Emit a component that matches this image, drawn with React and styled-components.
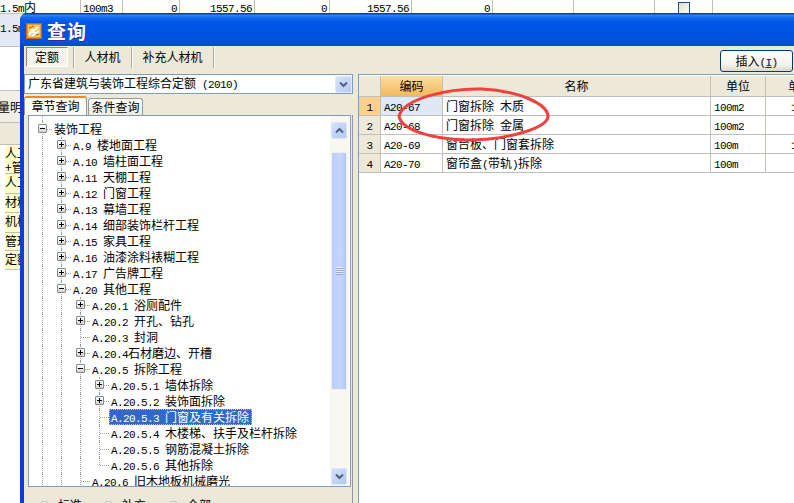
import React from 'react';
import styled, {createGlobalStyle} from 'styled-components';

const cjk = '"Noto Sans CJK SC", "Liberation Sans", sans-serif';
const beige = '#ece9d8';
const gridLine = '#c0bfb8';

const Global = createGlobalStyle`
html, body {
    margin: 0;
    padding: 0;
    background: #fff;
    font-family: ${cjk};
    font-size: 12px;
    color: #000;
}
`;

const Screen = styled.div`
position: relative;
width: 794px;
height: 503px;
overflow: hidden;
background: #fff;
line-height: 16px;
`;

// half-width latin text, same 6px cell as the old bitmap font
const Ascii = styled.span`
font-family: "Liberation Mono", monospace;
font-size: 11px;
letter-spacing: -0.6px;
white-space: pre;
`;

const Mixed = ({children}) => children.split(/([\x20-\x7e]+)/).filter(Boolean).map((part, i) => (
    /^[\x20-\x7e]+$/.test(part) ? <Ascii key={i}>{part}</Ascii> : <span key={i}>{part}</span>
));

/* ---- the sheet behind the dialog ---- */
const SheetRow = styled.div`
display: grid;
grid-template-columns: 81px 42px 57px 75px 75px 82px 81px 81px 81px 58px 82px;
height: 13px;
border-bottom: 1px solid ${gridLine};
`;
const SheetCell = styled.div`
border-right: 1px solid ${gridLine};
padding: 0 ${props => props.$flush ? 0 : 2}px;
text-align: ${props => props.$right ? 'right' : 'left'};
line-height: 14px;
white-space: nowrap;
display: ${props => props.$center ? 'flex' : 'block'};
justify-content: center;
`;
const CheckMark = styled.div`
width: 10px;
height: 11px;
margin-top: 2px;
border: 1px solid #1c5180;
background: linear-gradient(135deg, #dcdcd7, #ffffff);
`;
const SelectedRow = styled.div`
width: 20px;
background: #e2e9f5;
border-bottom: 1px solid ${gridLine};
padding-top: 5px;
box-sizing: border-box;
height: 33px;
white-space: nowrap;
overflow: hidden;
`;
const SheetGap = styled.div`
height: 43px;
`;
const LowerTabs = styled.div`
width: 20px;
background: #f1efe4;
border-top: 1px solid ${gridLine};
border-bottom: 1px solid ${gridLine};
padding-top: 8px;
box-sizing: border-box;
height: 33px;
font-size: 12px;
white-space: nowrap;
overflow: hidden;
text-indent: -2px;
`;
const LowerHead = styled.div`
width: 20px;
height: 21px;
background: ${beige};
border-bottom: 1px solid ${gridLine};
`;
const LowerRow = styled.div`
width: 15px;
height: ${props => props.$h}px;
box-sizing: border-box;
margin-left: 5px;
padding-top: 1px;
background: #ffffc8;
border-bottom: 1px solid ${gridLine};
line-height: 14px;
white-space: nowrap;
overflow: hidden;
`;

/* ---- query dialog ---- */
const Dialog = styled.div`
position: absolute;
left: 20px;
top: 13px;
width: 774px;
height: 490px;
display: flex;
flex-direction: column;
border-radius: 7px 0 0 0;
overflow: hidden;
background: #0a3fd6;
`;
const TitleBar = styled.div`
height: 33px;
flex: none;
display: flex;
align-items: center;
gap: 5px;
padding: 2px 0 0 6px;
box-sizing: border-box;
background: linear-gradient(#0a3ea8 0, #0a3ea8 1px, #2f86f5 2px, #0f66ee 5px, #0055e5 10px, #0153dd 28px, #0a4bc8 33px);
`;
const TitleText = styled.div`
color: #fff;
font-size: 19px;
font-weight: 700;
line-height: 24px;
letter-spacing: 1px;
text-shadow: 1px 1px 0 #3c2a9c;
`;
const Body = styled.div`
flex: 1;
margin-left: 4px;
background: ${beige};
display: flex;
flex-direction: column;
min-height: 0;
`;
const Toolbar = styled.div`
height: 28px;
flex: none;
display: flex;
align-items: flex-start;
padding: 1px 1px 0 2px;
box-sizing: border-box;
`;
const ToolButton = styled.div`
height: 20px;
width: ${props => props.$w}px;
box-sizing: border-box;
text-align: center;
line-height: 20px;
${props => props.$active ? `
    border: 1px solid;
    border-color: #8c8a7e #fff #fff #8c8a7e;
    background: repeating-conic-gradient(#fff 0 25%, ${beige} 0 50%) 0 0 / 2px 2px;
    line-height: 18px;
` : ''}
`;
const ToolSep = styled.div`
width: 1px;
height: 21px;
background: #aca899;
margin-left: ${props => props.$ml || 0}px;
box-shadow: 1px 0 0 #fff;
`;
const InsertButton = styled.div`
margin-left: auto;
margin-top: 3px;
width: 73px;
height: 22px;
box-sizing: border-box;
border: 1px solid #003c74;
border-radius: 3px;
background: linear-gradient(#ffffff, #f3f2ea 70%, #dcd8c6);
text-align: center;
line-height: 20px;
`;
const HotKey = styled.span`
font-family: "Liberation Mono", monospace;
font-size: 11px;
letter-spacing: -0.6px;
color: #0a246a;
text-shadow: 0 0 1px #e8a040;
u { text-decoration: underline; }
`;
const Panes = styled.div`
flex: 1;
display: flex;
min-height: 0;
`;
const LeftPane = styled.div`
width: 329px;
flex: none;
display: flex;
flex-direction: column;
`;
const Combo = styled.div`
height: 20px;
flex: none;
box-sizing: border-box;
border: 1px solid #7f9db9;
background: #fff;
padding-left: 3px;
display: flex;
align-items: center;
justify-content: space-between;
line-height: 18px;
`;
const ComboArrow = styled.div`
width: 17px;
height: 17px;
box-sizing: border-box;
border-radius: 2px;
background: linear-gradient(135deg, #d8e4fb, #b6c9f5);
border: 1px solid #e0e8fb;
display: flex;
align-items: center;
justify-content: center;
`;
const Tabs = styled.div`
height: 19px;
flex: none;
margin-top: 2px;
display: flex;
align-items: flex-end;
`;
const Tab = styled.div`
box-sizing: border-box;
width: ${props => props.$w}px;
height: ${props => props.$active ? 19 : 17}px;
margin-left: ${props => props.$active ? 0 : 1}px;
text-align: center;
line-height: 16px;
border: 1px solid #919b9c;
border-bottom: none;
border-radius: 3px 3px 0 0;
background: ${props => props.$active ? '#fbfaf5' : 'linear-gradient(#fff, #ecebe2)'};
border-top: ${props => props.$active ? '2px solid #e68b2c' : '1px solid #919b9c'};
`;
const TabPane = styled.div`
flex: 1;
min-height: 0;
padding: 0 1px 0 4px;
border-right: 1px solid #919b9c;
overflow: hidden;
`;
const TreeBox = styled.div`
width: 323px;
height: 372px;
box-sizing: border-box;
border: 1px solid #7f9db9;
background: #fff;
display: flex;
overflow: hidden;
`;
const TreeRows = styled.div`
flex: 1;
padding-left: 4px;
overflow: hidden;
white-space: nowrap;
`;
const TreeLead = styled.div`
height: 5px;
display: flex;
`;
const TreeRow = styled.div`
height: 16px;
display: flex;
align-items: center;
`;
const Guide = styled.div`
width: 19px;
height: 100%;
flex: none;
position: relative;
&::before {
    content: '';
    position: absolute;
    left: 9px;
    top: 0;
    height: ${props => props.$half ? '50%' : '100%'};
    border-left: 1px dotted #a3a39c;
}
`;
const Stub = styled.div`
position: absolute;
left: 10px;
top: 8px;
width: 9px;
border-top: 1px dotted #a3a39c;
`;
const Expander = styled.div`
position: absolute;
left: 5px;
top: 3px;
width: 9px;
height: 9px;
box-sizing: border-box;
border: 1px solid #7a8a99;
border-radius: 1px;
background:
    linear-gradient(#000, #000) center / 5px 1px no-repeat,
    ${props => props.$plus ? 'linear-gradient(#000, #000) center / 1px 5px no-repeat,' : ''}
    linear-gradient(#fff, #d8d4c4);
`;
const TreeLabel = styled.div`
height: 16px;
line-height: 15px;
padding: 0 3px 0 2px;
box-sizing: border-box;
${props => props.$selected ? `
    background: #316ac5;
    color: #fff;
    outline: 1px dotted #e8c060;
    outline-offset: -1px;
` : ''}
`;
const ScrollBar = styled.div`
width: 19px;
margin-right: 1px;
flex: none;
padding: 6px 2px 0 1px;
box-sizing: border-box;
background: #f8f7f0;
display: flex;
flex-direction: column;
`;
const ScrollButton = styled.div`
height: 17px;
flex: none;
box-sizing: border-box;
border: 1px solid #dbe5fb;
border-radius: 2px;
background: linear-gradient(135deg, #d4e0fb, #b4c8f6);
display: flex;
align-items: center;
justify-content: center;
`;
const ScrollThumb = styled.div`
height: 238px;
flex: none;
margin: 13px 0 78px;
box-sizing: border-box;
border: 1px solid #e8effd;
border-radius: 2px;
background: linear-gradient(90deg, #bccff9, #c6d6fb 60%, #b2c7f7);
display: flex;
align-items: center;
justify-content: center;
`;
const RadioRow = styled.div`
display: flex;
align-items: flex-start;
padding: 13px 0 0 11px;
`;
const RadioItem = styled.div`
display: flex;
align-items: flex-start;
gap: 8px;
width: ${props => props.$w}px;
flex: none;
line-height: 10px;
`;
const RadioDot = styled.div`
width: 11px;
height: 11px;
margin-top: 1px;
box-sizing: border-box;
border: 1px solid #b5b4a8;
border-radius: 50%;
background: #fff;
flex: none;
`;

/* ---- result grid ---- */
const RightPane = styled.div`
flex: 1;
margin-left: 5px;
min-width: 0;
border: 1px solid #7f9db9;
border-right: none;
border-bottom: none;
background: #fff;
overflow: hidden;
padding-top: 1px;
`;
const GridTable = styled.div`
display: grid;
grid-template-columns: 22px 62px 268px 55px 69px;
grid-auto-rows: 19px;
grid-template-rows: 21px;
width: 476px;
`;
const HeadCell = styled.div`
box-sizing: border-box;
border-right: 1px solid ${gridLine};
border-bottom: 1px solid ${gridLine};
background: ${props => props.$active ? 'linear-gradient(#fbdf9c, #f3b860)' : beige};
text-align: center;
line-height: 20px;
`;
const RowHead = styled.div`
box-sizing: border-box;
border-right: 1px solid ${gridLine};
border-bottom: 1px solid ${gridLine};
background: ${props => props.$active ? '#fdd08c' : beige};
text-align: center;
line-height: 18px;
`;
const Cell = styled.div`
box-sizing: border-box;
border-right: 1px solid ${gridLine};
border-bottom: 1px solid ${gridLine};
background: ${props => props.$active ? '#dfe8f5' : '#fff'};
padding-left: ${props => props.$pad || 3}px;
line-height: 18px;
white-space: nowrap;
overflow: hidden;
`;
const RingLayer = styled.svg`
position: absolute;
left: 390px;
top: 80px;
pointer-events: none;
`;

const lowerRows = [
    {h: 29, text: <>人工<br/>+管</>},
    {h: 20, text: '人工'},
    {h: 19, text: '材料'},
    {h: 20, text: '机械'},
    {h: 18, text: '管理'},
    {h: 19, text: '定额'},
];

const tree = [
    {d: 0, box: 'minus', text: '装饰工程'},
    {d: 1, box: 'plus', text: 'A.9 楼地面工程'},
    {d: 1, box: 'plus', text: 'A.10 墙柱面工程'},
    {d: 1, box: 'plus', text: 'A.11 天棚工程'},
    {d: 1, box: 'plus', text: 'A.12 门窗工程'},
    {d: 1, box: 'plus', text: 'A.13 幕墙工程'},
    {d: 1, box: 'plus', text: 'A.14 细部装饰栏杆工程'},
    {d: 1, box: 'plus', text: 'A.15 家具工程'},
    {d: 1, box: 'plus', text: 'A.16 油漆涂料裱糊工程'},
    {d: 1, box: 'plus', text: 'A.17 广告牌工程'},
    {d: 1, box: 'minus', text: 'A.20 其他工程'},
    {d: 2, box: 'plus', text: 'A.20.1 浴厕配件'},
    {d: 2, box: 'plus', text: 'A.20.2 开孔、钻孔'},
    {d: 2, text: 'A.20.3 封洞'},
    {d: 2, box: 'plus', text: 'A.20.4石材磨边、开槽'},
    {d: 2, box: 'minus', text: 'A.20.5 拆除工程'},
    {d: 3, box: 'plus', text: 'A.20.5.1 墙体拆除'},
    {d: 3, box: 'plus', text: 'A.20.5.2 装饰面拆除'},
    {d: 3, selected: true, text: 'A.20.5.3 门窗及有关拆除'},
    {d: 3, text: 'A.20.5.4 木楼梯、扶手及栏杆拆除'},
    {d: 3, text: 'A.20.5.5 钢筋混凝土拆除'},
    {d: 3, last: true, text: 'A.20.5.6 其他拆除'},
    {d: 2, text: 'A.20.6 旧木地板机械磨光'},
];

const rows = [
    {code: 'A20-67', name: '门窗拆除 木质', unit: '100m2', price: '1'},
    {code: 'A20-68', name: '门窗拆除 金属', unit: '100m2', price: ''},
    {code: 'A20-69', name: '窗台板、门窗套拆除', unit: '100m', price: '1'},
    {code: 'A20-70', name: '窗帘盒(带轨)拆除', unit: '100m', price: ''},
];

const Chevron = ({up, color = '#4d6185'}) => (
    <svg width="9" height="7" viewBox="0 0 9 7">
        <polyline points={up ? '1,5.5 4.5,2 8,5.5' : '1,1.5 4.5,5 8,1.5'} fill="none" stroke={color} strokeWidth="2"/>
    </svg>
);

const AppIcon = () => (
    <svg width="16" height="16" viewBox="0 0 16 16" style={{flex: 'none'}}>
        <rect x="0.5" y="0.5" width="15" height="15" fill="#e89a28" stroke="#c86a10"/>
        <rect x="2" y="2" width="12" height="12" fill="#f6c860"/>
        <path d="M3 12 L12 4 M4 8 L11 6 M6 13 L13 8 M3 10 L9 9" stroke="#fff" strokeWidth="1.6" fill="none"/>
        <path d="M3 5 L8 3 M10 12 L13 11" stroke="#a85a10" strokeWidth="1" fill="none"/>
    </svg>
);

const Grip = () => (
    <svg width="7" height="8" viewBox="0 0 7 8">
        <path d="M0 .5H7M0 2.5H7M0 4.5H7M0 6.5H7" stroke="#eef3fe" strokeWidth="1"/>
        <path d="M0 1.5H7M0 3.5H7M0 5.5H7M0 7.5H7" stroke="#8ca6e4" strokeWidth="1"/>
    </svg>
);

const TreeItem = ({item}) => (
    <TreeRow>
        {Array.from({length: item.d}, (_, i) => <Guide key={i}/>)}
        <Guide $half={item.last}>
            <Stub/>
            {item.box && <Expander $plus={item.box === 'plus'}/>}
        </Guide>
        <TreeLabel $selected={item.selected}><Mixed>{item.text}</Mixed></TreeLabel>
    </TreeRow>
);

const App = () => {
    return (
        <Screen>
            <Global/>
            <SheetRow>
                <SheetCell $flush><Mixed>1.5m内</Mixed></SheetCell>
                <SheetCell><Mixed>100m3</Mixed></SheetCell>
                <SheetCell $right><Ascii>0</Ascii></SheetCell>
                <SheetCell $right><Ascii>1557.56</Ascii></SheetCell>
                <SheetCell $right><Ascii>0</Ascii></SheetCell>
                <SheetCell $right><Ascii>1557.56</Ascii></SheetCell>
                <SheetCell $right><Ascii>0</Ascii></SheetCell>
                <SheetCell/>
                <SheetCell/>
                <SheetCell $center><CheckMark/></SheetCell>
                <SheetCell/>
            </SheetRow>
            <SelectedRow><Ascii>1.5m</Ascii></SelectedRow>
            <SheetGap/>
            <LowerTabs>量明</LowerTabs>
            <LowerHead/>
            {lowerRows.map((row, i) => <LowerRow key={i} $h={row.h}>{row.text}</LowerRow>)}

            <Dialog>
                <TitleBar>
                    <AppIcon/>
                    <TitleText>查询</TitleText>
                </TitleBar>
                <Body>
                    <Toolbar>
                        <ToolButton $active $w={42}>定额</ToolButton>
                        <ToolSep $ml={5}/>
                        <ToolButton $w={57}>人材机</ToolButton>
                        <ToolSep/>
                        <ToolButton $w={81}>补充人材机</ToolButton>
                        <ToolSep/>
                        <InsertButton>插入<HotKey>(<u>I</u>)</HotKey></InsertButton>
                    </Toolbar>
                    <Panes>
                        <LeftPane>
                            <Combo>
                                <span><Mixed>广东省建筑与装饰工程综合定额 (2010)</Mixed></span>
                                <ComboArrow><Chevron/></ComboArrow>
                            </Combo>
                            <Tabs>
                                <Tab $active $w={63}>章节查询</Tab>
                                <Tab $w={55}>条件查询</Tab>
                            </Tabs>
                            <TabPane>
                                <TreeBox>
                                    <TreeRows>
                                        <TreeLead><Guide/></TreeLead>
                                        {tree.map(item => <TreeItem key={item.text} item={item}/>)}
                                    </TreeRows>
                                    <ScrollBar>
                                        <ScrollButton><Chevron up/></ScrollButton>
                                        <ScrollThumb><Grip/></ScrollThumb>
                                        <ScrollButton><Chevron/></ScrollButton>
                                    </ScrollBar>
                                </TreeBox>
                                <RadioRow>
                                    <RadioItem $w={64}><RadioDot/>标准</RadioItem>
                                    <RadioItem $w={65}><RadioDot/>补充</RadioItem>
                                    <RadioItem $w={60}><RadioDot/>全部</RadioItem>
                                </RadioRow>
                            </TabPane>
                        </LeftPane>
                        <RightPane>
                            <GridTable>
                                <HeadCell/>
                                <HeadCell $active>编码</HeadCell>
                                <HeadCell>名称</HeadCell>
                                <HeadCell>单位</HeadCell>
                                <HeadCell>单价</HeadCell>
                                {rows.map((row, i) => (
                                    <React.Fragment key={row.code}>
                                        <RowHead $active={i === 0}><Ascii>{String(i + 1)}</Ascii></RowHead>
                                        <Cell $active={i === 0}><Ascii>{row.code}</Ascii></Cell>
                                        <Cell><Mixed>{row.name}</Mixed></Cell>
                                        <Cell><Ascii>{row.unit}</Ascii></Cell>
                                        <Cell $pad={25}><Ascii>{row.price}</Ascii></Cell>
                                    </React.Fragment>
                                ))}
                            </GridTable>
                        </RightPane>
                    </Panes>
                </Body>
            </Dialog>

            <RingLayer width="170" height="70" viewBox="0 0 170 70">
                <path d="M9 36 C14 18 60 8 92 9 C130 11 157 24 158 36 C158 48 118 60 76 60 C42 59 11 50 9 36 Z" fill="none" stroke="#f2403f" strokeWidth="3"/>
            </RingLayer>
        </Screen>
    );
};

export default App;
